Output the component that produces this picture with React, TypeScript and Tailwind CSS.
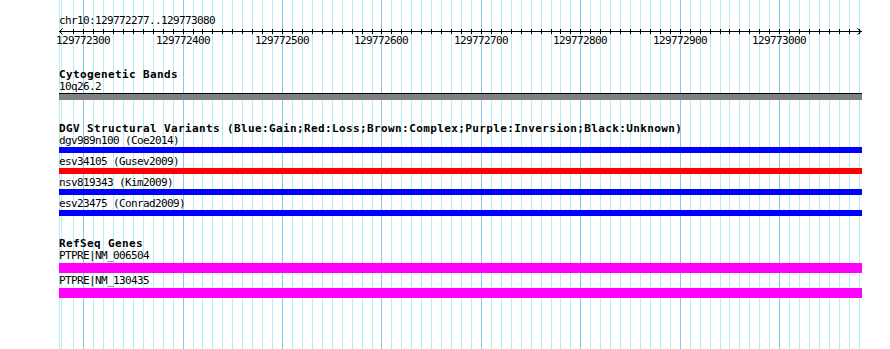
import React from 'react';

const START = 129772277;
const x = (p: number) => Math.round(60.3 + (p - START) * 0.99435);

const minor: number[] = [];
for (let p = 129772290; p <= 129773080; p += 10) minor.push(p);
const majors = minor.filter(p => p % 100 === 0);

interface Feature {
  label: string;
  color: string;
}

const dgv: Feature[] = [
  { label: "dgv989n100 (Coe2014)", color: "bg-[#0000ff]" },
  { label: "esv34105 (Gusev2009)", color: "bg-[#ff0000]" },
  { label: "nsv819343 (Kim2009)", color: "bg-[#0000ff]" },
  { label: "esv23475 (Conrad2009)", color: "bg-[#0000ff]" },
];

const genes = ["PTPRE|NM_006504", "PTPRE|NM_130435"];

const Grid: React.FC = () => (
  <svg className="absolute inset-0" width={890} height={349}>
    {[59, 61].map(v => (
      <line key={v} x1={v + 0.5} x2={v + 0.5} y1={0} y2={349} stroke="#b4ecf0" />
    ))}
    {minor.map(p => (
      <line
        key={p}
        x1={x(p) + 0.5}
        x2={x(p) + 0.5}
        y1={0}
        y2={349}
        stroke={p % 100 === 0 ? "#8cc8ea" : "#b4ecf0"}
      />
    ))}
  </svg>
);

const Ruler: React.FC = () => (
  <svg width={803} height={19} className="block overflow-visible">
    <line x1={0} x2={803} y1={4.5} y2={4.5} stroke="#000" />
    <polyline points="3.5,1.5 0.5,4.5 3.5,7.5" fill="none" stroke="#000" />
    <polyline points="798.5,1.5 802,4.5 798.5,7.5" fill="none" stroke="#000" />
    {minor.map(p => (
      <line key={p} x1={x(p) - 59 + 0.5} x2={x(p) - 59 + 0.5} y1={2} y2={7} stroke="#000" />
    ))}
    {majors.map(p => (
      <text
        key={p}
        x={x(p) - 59}
        y={17}
        textAnchor="middle"
        fontFamily="'DejaVu Sans Mono', monospace"
        fontSize={11}
        letterSpacing={-0.62}
        fill="#000"
      >
        {p}
      </text>
    ))}
  </svg>
);

const Header: React.FC<{ children: React.ReactNode }> = ({ children }) => (
  <div className="h-[12px] leading-[12px] font-bold tracking-[0.38px] whitespace-nowrap">{children}</div>
);

const Label: React.FC<{ children: React.ReactNode }> = ({ children }) => (
  <div className="h-[12px] leading-[12px] tracking-[-0.62px] whitespace-nowrap">{children}</div>
);

export default function App() {
  return (
    <div className="relative w-[890px] h-[349px] bg-white overflow-hidden text-black text-[11px] font-['DejaVu_Sans_Mono',monospace]">
      <Grid />
      <div className="relative w-[862px] pl-[59px] pt-[15px]">
        <Label>chr10:129772277..129773080</Label>
        <Ruler />

        <div className="mt-[23px]">
          <Header>Cytogenetic Bands</Header>
          <Label>10q26.2</Label>
          <div className="h-[7px] border-t border-black bg-[#808080]" />
        </div>

        <div className="mt-[23px] flex flex-col">
          <Header>DGV Structural Variants (Blue:Gain;Red:Loss;Brown:Complex;Purple:Inversion;Black:Unknown)</Header>
          <div className="flex flex-col gap-[3px]">
            {dgv.map(f => (
              <div key={f.label}>
                <Label>{f.label}</Label>
                <div className={`h-[6px] ${f.color}`} />
              </div>
            ))}
          </div>
        </div>

        <div className="mt-[22px] flex flex-col">
          <Header>RefSeq Genes</Header>
          <div className="flex flex-col gap-[2px]">
            {genes.map(g => (
              <div key={g}>
                <Label>{g}</Label>
                <div className="mt-[1px] h-[10px] bg-[#ff00ff]" />
              </div>
            ))}
          </div>
        </div>
      </div>
    </div>
  );
}
